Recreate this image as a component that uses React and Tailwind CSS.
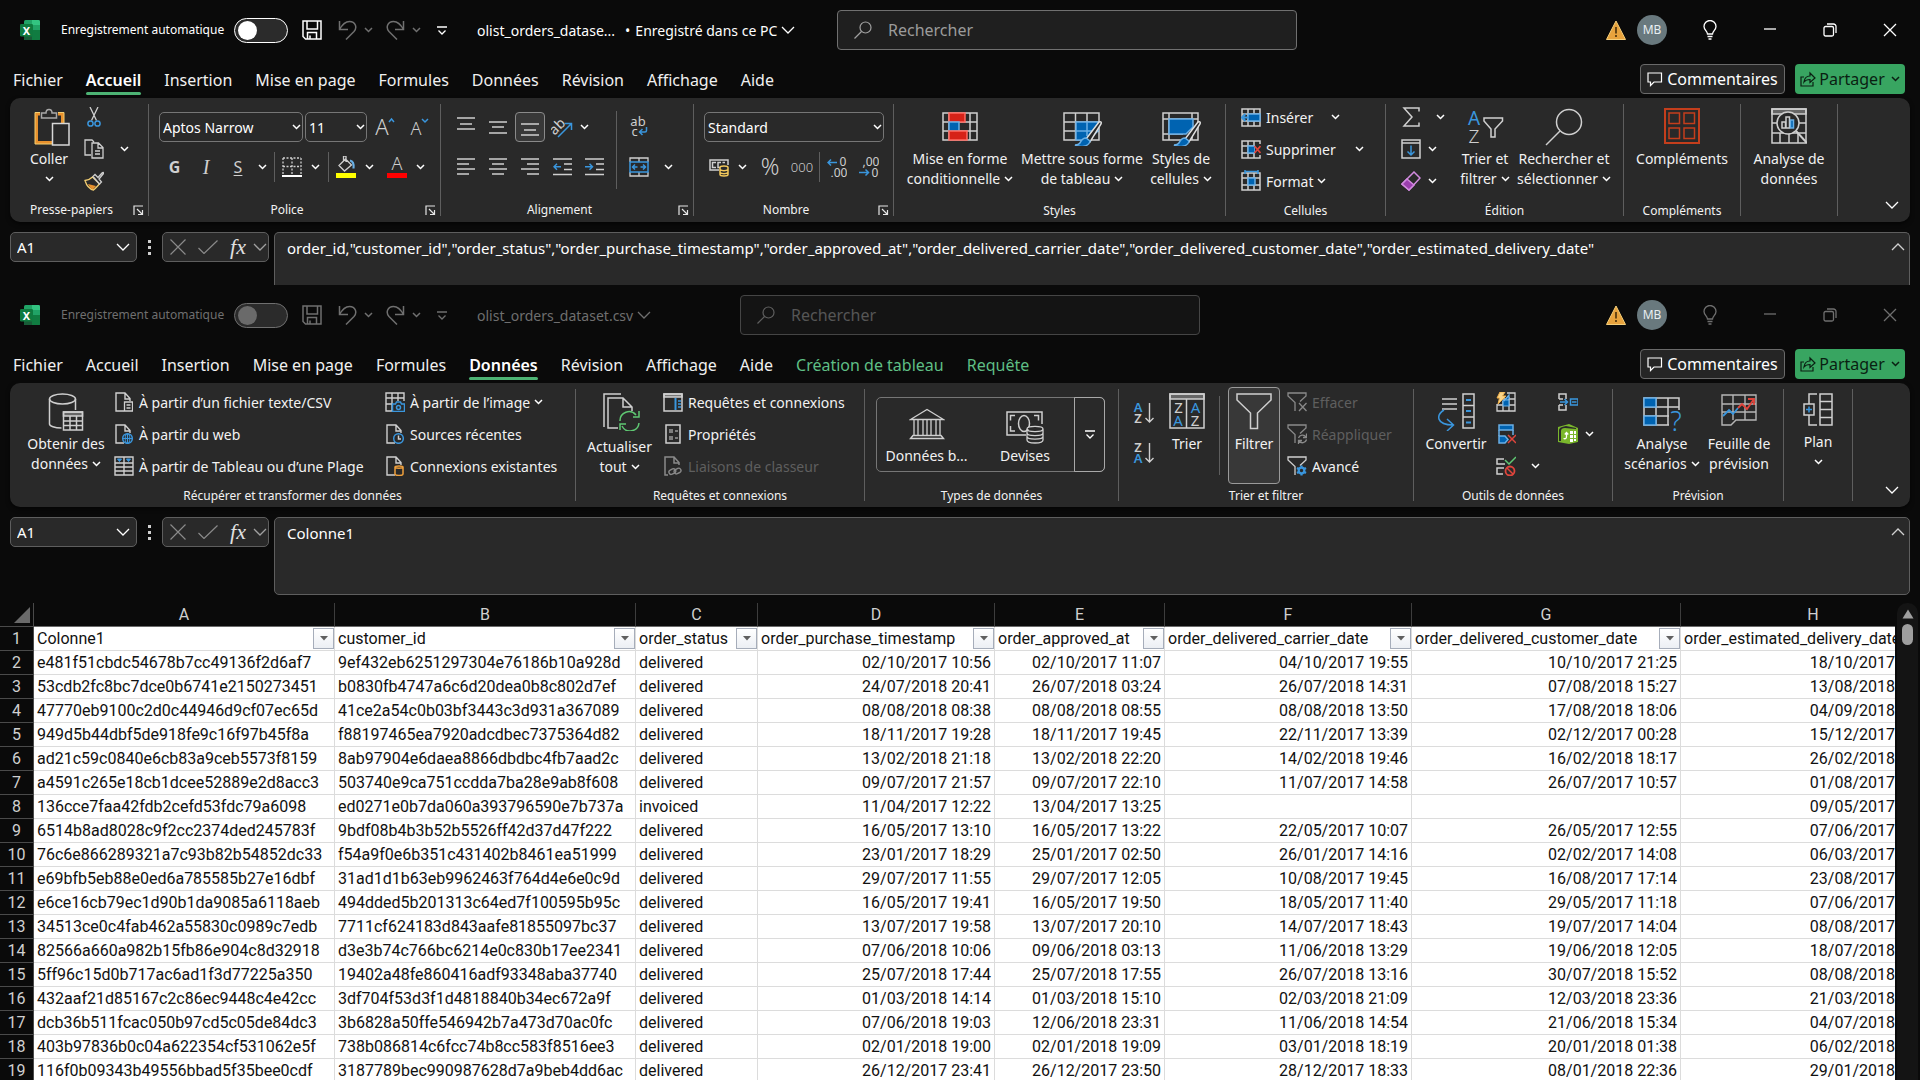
import React from "react";

const L = "#cfcfcf";
const B = "#3a96dd";
const F = "#0063b1";

/* ---------- generic pieces ---------- */

function Svg({ w = 20, h = 20, s = L, sw = 1.5, children }) {
  return (
    <svg width={w} height={h} viewBox={`0 0 ${w} ${h}`} fill="none" stroke={s} strokeWidth={sw} className="block shrink-0" aria-hidden="true">
      {children}
    </svg>
  );
}

function T({ c = L, size = 12, weight = 400, children, ...rest }) {
  return (
    <text fill={c} stroke="none" fontSize={size} fontWeight={weight} textAnchor="middle" fontFamily="Noto Sans, Open Sans, sans-serif" {...rest}>
      {children}
    </text>
  );
}

const Caret = ({ color = "#fff" }) => (
  <Svg w={9} h={6} s={color}><path d="M1 1l3.5 3.5L8 1" /></Svg>
);

const WideCaret = ({ color = "#fff", up }) => (
  <Svg w={14} h={8} s={color} sw={1.3}><path d={up ? "M1 7l6-6 6 6" : "M1 1l6 6 6-6"} /></Svg>
);

function CaretButton({ label, className = "" }) {
  return (
    <button type="button" aria-label={label} className={`flex h-6 w-4 shrink-0 items-center justify-center ${className}`}>
      <Caret />
    </button>
  );
}

function IconButton({ label, className = "", children }) {
  return (
    <button type="button" aria-label={label} className={`flex h-[30px] shrink-0 items-center justify-center ${className}`}>
      {children}
    </button>
  );
}

const Divider = ({ className = "" }) => <div className={`w-px shrink-0 bg-[#5e5e5e] ${className}`} />;

const Row = ({ children }) => <div className="flex h-8 items-center pb-0.5">{children}</div>;

function Group({ label, launcher, className, children }) {
  return (
    <>
      <section aria-label={label || undefined} className={`flex shrink-0 flex-col pt-1 ${className}`}>
        <div className="flex h-24">{children}</div>
        <div className={`flex h-6 items-center text-[12px] ${launcher ? "" : "pt-0.5"}`}>
          <span className="flex-1 text-center whitespace-nowrap">{label}</span>
          {launcher && (
            <button type="button" aria-label={`Options ${label}`} className="mr-[3px] w-3">
              <Svg w={11} h={11} s="#e6e6e6" sw={1.2}><path d="M1 10V1h9M4 4l5 5M9.500 5v4.500H5" /></Svg>
            </button>
          )}
        </div>
      </section>
      <Divider className="my-1.5" />
    </>
  );
}

function BigButton({ icon, lines, caret, className = "", iconClass = "h-[41px]" }) {
  return (
    <button type="button" className={`flex shrink-0 flex-col items-center pt-1.5 text-[14px] leading-5 whitespace-nowrap ${className}`}>
      <span className={`flex items-start justify-center ${iconClass}`}>{icon}</span>
      {lines.map((t, i) => (
        <span key={t} className="flex h-5 items-center gap-1">
          {t}
          {caret && i === lines.length - 1 && <Caret />}
        </span>
      ))}
    </button>
  );
}

function RowButton({ icon, text, disabled, caret, caretClass = "" }) {
  return (
    <Row>
      <button type="button" disabled={disabled} aria-label={text} className="flex items-center gap-[5px] text-[14px] whitespace-nowrap disabled:text-[#5f5f5f]">
        <span className="flex w-5 justify-center">{icon}</span>
        {text}
      </button>
      {caret && <CaretButton label={`${text}, options`} className={caretClass} />}
    </Row>
  );
}

/* ---------- title bar icons ---------- */

const ExcelLogo = () => (
  <Svg s="none">
    <rect x="4" y="0" width="16" height="20" rx="1.5" fill="#21a366" />
    <path d="M12 0h6.500a1.500 1.500 0 0 1 1.500 1.500V5h-8z" fill="#33c481" />
    <path d="M4 10h8v10H5.500A1.500 1.500 0 0 1 4 18.500z" fill="#185c37" />
    <path d="M12 10h8v8.500a1.500 1.500 0 0 1-1.500 1.500H12z" fill="#107c41" />
    <rect x="0" y="4" width="13" height="12.500" rx="1.200" fill="#0f7a3f" />
    <T x="6.500" y="14.500" size={11} weight={700} c="#fff">X</T>
  </Svg>
);
const SaveIcon = ({ c }) => (
  <Svg s={c}><path d="M1 1h18v18H3.500L1 16.500zM5 1v8h10.500V1M5.500 19v-6.500h9V19M8 15.500V19" /></Svg>
);
const UndoIcon = () => (
  <Svg s="#707070" w={19}><path d="M1.500 1v8.500H10M1.500 9.500C4 5 7 1.500 11.500 1.500c6 0 8 6 4.500 10L8 19.500" /></Svg>
);
const RedoIcon = () => (
  <Svg s="#707070" w={19}><path d="M17.500 1v8.500H9M17.500 9.500C15 5 12 1.500 7.500 1.500c-6 0-8 6-4.500 10l8 8" /></Svg>
);
const CustomIcon = ({ c }) => (
  <Svg w={10} h={9} s={c} sw={1.3}><path d="M0 1h10M1.500 4.500L5 8l3.500-3.500" /></Svg>
);
const SearchIcon = ({ c }) => (
  <Svg w={18} h={18} s={c} sw={1.2}><circle cx="11.500" cy="6.500" r="5.500" /><path d="M7.500 10.500L.500 17.500" /></Svg>
);
const WarnIcon = () => (
  <Svg w={20} h={19} s="none"><path d="M10 0l9.500 18.500H.500z" fill="#e8a33d" stroke="#f5cf7a" strokeWidth="1" /><path d="M10 6v6.500M10 14v2" stroke="#5a3d10" strokeWidth="1.800" /></Svg>
);

/* ---------- ribbon icons ---------- */

const PasteIcon = () => (
  <Svg w={42} h={38}>
    <path d="M12 6H8.500v28.500H24M30 6h4.500v9" stroke="#e8912d" strokeWidth="3" />
    <path d="M12 4.500H7V36h17M30 4.500h6V15" stroke="#f3cf73" strokeWidth="1" />
    <path d="M13.500 5h4.500a3 3.500 0 0 1 6 0h4.500v5h-15z" fill="#292929" stroke="#a8a8a8" />
    <rect x="24.500" y="15.500" width="16.500" height="21.500" fill="#292929" stroke="#d8d8d8" />
  </Svg>
);
const CutIcon = () => (
  <Svg w={14}><path d="M3 0l6.500 13.500M11 0L4.500 13.500" strokeWidth="1.300" /><circle cx="3.500" cy="16.500" r="2.600" stroke={B} /><circle cx="10.500" cy="16.500" r="2.600" stroke={B} /></Svg>
);
const CopyIcon = () => (
  <Svg sw={1.3}><path d="M7 16H1V1h7l2 2M8 4h6.500L19 8.500V19H8zM14 4v5h5M11 12h5M11 15h5" /></Svg>
);
const BrushIcon = () => (
  <Svg sw={1.3}>
    <path d="M1 9.500c3.500-.300 5.500-1.500 7.500-3.500l7 7c-2 2-3.500 4-6 6C5 18 2.500 14.500 1 9.500z" fill="#292929" stroke="#f3cf73" />
    <path d="M4 13l8 2-3 3.500c-2-.500-4-3-5-5.500z" fill="#e8912d" stroke="none" />
    <path d="M9 5.500l2-2 3 3L18 2q1.500-1.500 1.500.500L15 8l2.500 3-2 2z" fill="#292929" />
  </Svg>
);
const GrowIcon = ({ down }) => (
  <Svg><T x="7" y={down ? 18 : 18} size={down ? 18 : 22} weight={300}>A</T><path d={down ? "M13 2l3 3 3-3" : "M14 5l2.500-3L19 5"} stroke={B} /></Svg>
);
const BordersIcon = () => (
  <Svg><path d="M1 1h18M1 1v17M19 1v17M10 1v17M1 9.500h18" strokeDasharray="2 1.500" strokeWidth="1.300" /><path d="M0 19h20" stroke="#fff" strokeWidth="2" /></Svg>
);
const FillIcon = () => (
  <Svg h={22}><path d="M10 2.500L3 9.500l5.500 5.500 7-6L10 3.500zM10 6V0H7.500v5" strokeWidth="1.300" /><path d="M14 4.500c3 .500 4 3.500 3.500 8" stroke="#69afe5" strokeWidth="2.200" /><rect y="17" width="20" height="5" fill="#ffff00" stroke="none" /></Svg>
);
const FontColorIcon = () => (
  <Svg h={22}><T x="10" y="14" size={18} weight={300}>A</T><rect y="17" width="20" height="5" fill="#f00" stroke="none" /></Svg>
);

const HLines = ({ rows, h = 18 }) => (
  <Svg w={18} h={h}>{rows.map(([a, b, y]) => <path key={y} d={`M${a} ${y}H${b}`} />)}</Svg>
);
const OrientIcon = () => (
  <Svg w={22} h={22}><T x="7" y="14" size={14} transform="rotate(-45 8 11)">ab</T><path d="M7 21L20 8M13.500 7.500H20.500V14" stroke={B} /></Svg>
);
const WrapIcon = () => (
  <Svg w={18} h={22}><T x="8" y="10" size={13}>ab</T><T x="4.500" y="20" size={13}>c</T><path d="M16.500 11v3.500q0 1.500-1.500 1.500H9.500M12.500 13L9.500 16l3 3" stroke={B} /></Svg>
);
const MergeIcon = () => (
  <Svg><path d="M1 5V1h18v4M10 1v4M1 15v4h18v-4M10 15v4" strokeWidth="1.300" /><rect x="1" y="5" width="18" height="10" stroke={B} /><path d="M3.500 10h5M6 7.500L3.500 10 6 12.500M16.500 10h-5M14 7.500l2.500 2.500-2.500 2.500" stroke={B} /></Svg>
);
const IndentIcon = ({ right }) => (
  <Svg w={19} h={18}><path d="M0 1h19M11 6h8M11 11.500h8M0 16.500h19" /><path d={right ? "M0 8.800h7.500M4.500 5.800l3 3-3 3" : "M8 8.800H.800M4 5.800l-3 3 3 3"} stroke={B} /></Svg>
);
const CurrencyIcon = () => (
  <Svg><path d="M10 13H1V3h18v5M7 5.500H3.500v5H7M12 5.500H9v5h2M16 5.500h-2.500" /><path d="M11 10.500c0-2 8-2 8 0v7c0 2-8 2-8 0zM11 12.500c2 1.500 6 1.500 8 0M11 15.500c2 1.500 6 1.500 8 0" stroke="#f3c95c" fill="#292929" /></Svg>
);
const PercentIcon = () => <Svg><T x="10" y="18" size={23} weight={300}>%</T></Svg>;
const ZerosIcon = () => <Svg w={22} h={14}><T x="11" y="12" size={13} weight={300}>000</T></Svg>;
const DecimalIcon = ({ less }) => (
  <Svg>
    <T x={less ? 12 : 16} y="9" size={12}>{less ? ",00" : "0"}</T>
    <T x={less ? 16 : 12} y="20" size={12}>{less ? "0" : ",00"}</T>
    <path d={less ? "M0 15.500h9.500M6.500 12.500l3 3-3 3" : "M10 5.500H1M4 2.500l-3 3 3 3"} stroke={B} />
  </Svg>
);

const CondIcon = () => (
  <Svg w={36} h={34}>
    <path d="M1 5h34v27H1zM1 14h34M1 23h34M7 5v27M28 5v27" />
    <rect x="7" y="5" width="16" height="9" fill="#d62218" stroke="#ff6b62" />
    <rect x="7" y="14" width="10" height="9" fill={F} stroke="#69afe5" />
    <rect x="7" y="23" width="18" height="9" fill="#d62218" stroke="#ff6b62" />
  </Svg>
);
const Brush2 = () => (
  <>
    <path d="M36 14L23 31l4 3 11-18q1-3-2-2z" fill="#292929" stroke="#e0e0e0" />
    <path d="M23 30c-4 0-5 3-6 5-1 1.500-3 2-5 2 5 2.500 14 2 15-4z" fill={F} stroke="#69afe5" />
  </>
);
const TableStyleIcon = () => (
  <Svg w={39} h={38}>
    <path d="M1 5h35v27H1zM1 14h35M1 23h35M12.500 5v27M24 5v27" />
    <path d="M13 14h22v9L25 32H13z" fill={F} stroke="#69afe5" />
    <path d="M13 23h18M24 14v14" stroke="#69afe5" />
    <Brush2 />
  </Svg>
);
const CellStyleIcon = () => (
  <Svg w={39} h={38}>
    <path d="M1 5h35v27H1zM1 11h35M7 5v27M30 5v27M1 26h20" />
    <path d="M7 11h24v8l-7 7H7z" fill={F} stroke="#69afe5" />
    <Brush2 />
  </Svg>
);
const CellsIcon = ({ kind }) => (
  <Svg h={22}>
    <path d="M1 3h18v17H1zM1 8h18M1 15h18M7 3v17M13 3v17" />
    <rect x="7" y="8" width={kind === "insert" ? 12 : 7} height="7" fill={F} stroke="#69afe5" />
    {kind === "insert" && <path d="M8 11.500H1M4.500 8L1 11.500 4.500 15" stroke={B} strokeWidth="2" />}
    {kind === "delete" && <><path d="M14 6h6v11h-6z" fill="#292929" stroke="none" /><path d="M13.500 8l6 7M19.500 8l-6 7" stroke="#e0453c" strokeWidth="1.800" /></>}
    {kind === "format" && <path d="M4 1.500h13M4 0v4M17 0v4" stroke={B} />}
  </Svg>
);
const SigmaIcon = () => <Svg w={18} h={20}><path d="M17 4.500V1H2l8 9-8 9h15v-3.500" /></Svg>;
const FillDownIcon = () => <Svg h={20}><path d="M1 1h18v18H1zM1 4h18" /><path d="M10 6.500V16M6.500 12.500L10 16l3.500-3.500" stroke={B} /></Svg>;
const EraserIcon = () => <Svg><path d="M13 1l6 6L8 19l-7-6z" stroke="#d38be0" /><path d="M6 8l7 6-5 5-7-6z" fill="#9b3fae" stroke="#d38be0" /></Svg>;
const SortFilterIcon = () => (
  <Svg w={37} h={37}><T x="7" y="17" size={19} c={B}>A</T><T x="7" y="35" size={19} weight={300}>Z</T><path d="M17 10h18.500v3l-7.500 8v8h-4v-8l-7-8z" /></Svg>
);
const FindIcon = () => <Svg w={38} h={38}><circle cx="24" cy="14" r="12.500" /><path d="M15 23L1 37" /></Svg>;
const AddinsIcon = () => (
  <Svg w={36} h={36} s="#c43e1c"><path d="M1 1h34v34H1z" strokeWidth="2" /><path d="M5 5h10.500v10.500H5zM20 5h10.500v10.500H20zM5 20h10.500v10.500H5zM20 20h10.500v10.500H20z" /></Svg>
);
const AnalyzeIcon = () => (
  <Svg w={36} h={37}>
    <path d="M1 1h34v5H1z" fill="#666" /><path d="M1 1h34v34H1zM1 15h34M1 25h34M9 25v10M18 25v10M27 25v10" />
    <circle cx="17" cy="15" r="11" fill="#292929" /><path d="M25 23l11 12" strokeWidth="2" />
    <path d="M11 14h3.500v6H11zM15 9h3.500v11H15z" /><path d="M19.500 12h3v8h-3z" fill={F} stroke="#69afe5" />
  </Svg>
);

const DatabaseIcon = () => (
  <Svg w={36} h={38}><ellipse cx="14.500" cy="6" rx="13" ry="5" /><path d="M1.500 6v25c0 2 5 4 12 4M27.500 6v11" /><path d="M15.500 19h19v4h-19z" fill="#666" /><path d="M15.500 19h19v18h-19zM15.500 28h19M15.500 32.500h19M22 23v14M28.500 23v14" /></Svg>
);
const DocBase = () => <path d="M9 19H1V1h9l5 5.500V9M10 1v6h5" strokeWidth="1.400" />;
const FileTextIcon = () => <Svg w={18}><DocBase /><path d="M9.500 10h8v9h-8zM11.500 13h4M11.500 16h4" fill="#292929" strokeWidth="1.300" /></Svg>;
const FileWebIcon = () => (
  <Svg w={18}><DocBase /><circle cx="12.500" cy="14.500" r="4.800" fill="#292929" stroke={B} /><path d="M12.500 10v9M8 14.500h9" stroke={B} strokeWidth="1.200" /><ellipse cx="12.500" cy="14.500" rx="2.300" ry="4.800" stroke={B} strokeWidth="1" /></Svg>
);
const TableIcon = () => <Svg><path d="M1 1h18v18H1zM1 7h18M1 11h18M1 15h18M10 1v18" strokeWidth="1.400" /><path d="M3.500 3h4l-2 2.500zM12.500 3h4l-2 2.500z" fill={B} stroke={B} strokeWidth="1" /></Svg>;
const ImageIcon = () => <Svg><path d="M7 19H1V1h18v8M1 6h18M1 12h7M7 1v18M13 1v8" strokeWidth="1.400" /><path d="M7.500 12h3l1-2h4l1 2h3v7.500h-12z" fill="#292929" stroke={B} /><circle cx="13.500" cy="15.500" r="2" stroke={B} /></Svg>;
const RecentIcon = () => <Svg w={18}><DocBase /><circle cx="12.500" cy="14.500" r="4.800" fill="#292929" stroke={B} /><path d="M12.500 11.500v3.500h2.500" /></Svg>;
const ConnIcon = () => <Svg w={18}><DocBase /><path d="M9 11c0-1.500 8-1.500 8 0v7c0 2-8 2-8 0zM9 11c0 1.500 8 1.500 8 0" fill="#292929" stroke="#f0a03c" /></Svg>;
const RefreshAllIcon = () => (
  <Svg w={38} h={38}><path d="M18 1H1v33M15 35H5V5h15l9 9v4M20 5v9h9" /><path d="M17 28a9 9 0 0 1 16-6M36 18v6h-6M36 30a9 9 0 0 1-17 3M17 37v-6h6" stroke="#5fc873" /></Svg>
);
const QueriesIcon = () => <Svg h={19}><path d="M1 1h18v3H1z" fill="#777" /><path d="M1 1h18v17H1z" /><path d="M12.500 5v12" stroke={B} strokeWidth="2" /><path d="M15 8h3M15 11h3M15 14h3" stroke={B} /></Svg>;
const PropsIcon = () => <Svg w={16}><path d="M1 1h14v18H1z" /><path d="M4 6h4M4 8h4M4 13h4M4 15h4M10 7h3M10 14h3" stroke="#9a9a9a" strokeWidth="1.300" /></Svg>;
const LinksIcon = () => (
  <Svg w={18} s="#8a8a8a"><path d="M4 19H1V1h9l5 5.500V9M10 1v6h5" /><g strokeWidth="1.400"><rect x="5" y="13.500" width="7" height="4.500" rx="2.200" transform="rotate(-25 8 16)" /><rect x="10" y="13" width="7" height="4.500" rx="2.200" transform="rotate(-25 13 15)" /></g></Svg>
);
const BankIcon = () => (
  <Svg w={36} h={38}><path d="M1.500 11.500L18 1.500l16.500 10zM5 12v15M9 12v15M14 12v15M18 12v15M22 12v15M27 12v15M31 12v15" strokeWidth="1.300" /><path d="M4 27.500h28l2.500 3h-33z" /></Svg>
);
const MoneyIcon = () => (
  <Svg w={38} h={38}><path d="M20 27H1V4h35v12M9 7.500H4.500v5M4.500 18v5H9M28 7.500h4.500v5" /><ellipse cx="18" cy="15.500" rx="5.500" ry="8" /><path d="M21 21c0-3.500 16-3.500 16 0v11c0 4-16 4-16 0zM21 21c0 3.500 16 3.500 16 0M21 25c0 3.500 16 3.500 16 0M21 28.500c0 3.500 16 3.500 16 0" fill="#292929" strokeWidth="1.300" /></Svg>
);
const SortIcon = ({ desc }) => (
  <Svg w={22} h={22}><T x="5" y="9.500" size={13} weight={600} c={desc ? L : B}>{desc ? "Z" : "A"}</T><T x="5" y="21" size={13} weight={600} c={desc ? B : L}>{desc ? "A" : "Z"}</T><path d="M16.500 1v19M12.500 16l4 4 4-4" strokeWidth="1.400" /></Svg>
);
const SortBigIcon = () => (
  <Svg w={36} h={36}><path d="M1 1h34v5H1z" fill="#666" /><path d="M1 1h34v34H1zM17.500 6v29" /><T x="9.500" y="19.500" size={15}>Z</T><T x="9" y="32.500" size={15} c={B}>A</T><T x="26.500" y="19.500" size={15} c={B}>A</T><T x="26" y="32.500" size={15}>Z</T></Svg>
);
const FunnelBig = () => <Svg w={36} h={37}><path d="M1 1h34v6L21.500 20v15.500h-7V20L1 7z" /></Svg>;
const FunnelSmall = ({ kind, c }) => (
  <Svg s={c}>
    <path d="M13 9.500l6-5.500V1H1v3l7 6.500V19" strokeWidth="1.300" />
    {kind === "clear" && <path d="M12 11l7.500 8M19.500 11L12 19" strokeWidth="1.300" />}
    {kind === "reapply" && <path d="M11.500 14a4.200 4.200 0 0 1 7.500-1M19.500 9.500v4H16M19.500 15.500a4.200 4.200 0 0 1-7.500 1.500M11.500 20v-3.500H15" strokeWidth="1.300" />}
    {kind === "advanced" && <><circle cx="14.500" cy="14.500" r="2.800" stroke={B} strokeWidth="2.200" /><path d="M14.500 9.500v2.500M14.500 17v2.500M10 12l2.200 1.300M16.800 15.700L19 17M10 17l2.200-1.300M16.800 13.300L19 12" stroke={B} strokeWidth="2.200" /></>}
  </Svg>
);
const ConvertIcon = () => (
  <Svg w={38} h={38}><path d="M5 6h15M5 11h15M5 16h15M26 1h11v34H26zM26 12.500h11M26 24h11" /><path d="M29 7h5M29 18h5M29 29.500h5" stroke={B} strokeWidth="2" /><path d="M7 17c-8 5-8 15 9 15M10 26l6.500 6-6.500 6" stroke={B} /></Svg>
);
const FlashIcon = () => <Svg><path d="M1 12v7h18V1h-8M1 13h18M7 7h12M7 9v10M13 5v14" strokeWidth="1.300" /><path d="M8 9l5-6v4M7 8h6v6H7z" fill={F} stroke="#69afe5" strokeWidth="1.200" /><path d="M4 0h5L6.500 4H10L2 12l1.500-6H1z" fill="#f9d58a" stroke="#f0b04a" strokeWidth="1" /></Svg>;
const DedupIcon = () => <Svg><path d="M3 1h14v5H3zM3 12h6l3 3.500-3 3.500H3z" fill={F} stroke="#69afe5" /><path d="M3 6v6M17 6v5" stroke="#69afe5" /><path d="M12 11l8 8M20 11l-8 8" stroke="#e0453c" /></Svg>;
const ValidIcon = () => <Svg><path d="M8 3H1v5h8M8 12H1v6h6" /><path d="M9 4l4 4 7-7" stroke="#5fc873" /><circle cx="14" cy="15" r="4.500" stroke="#e0453c" strokeWidth="1.800" /><path d="M11 12l6 6" stroke="#e0453c" /></Svg>;
const ConsolidateIcon = () => <Svg h={18}><path d="M8 6V1H1v5M1 12v5h7v-5M1 6h4M1 12h4" /><path d="M2 9h7M6.500 6l3 3-3 3M12.500 6H20v6h-7.500zM14 9h4.500" stroke={B} /></Svg>;
const ModelIcon = () => <Svg s="none"><path d="M0 3l11-3 9 4v14l-9 2-11-2z" fill="#7ab72c" /><path d="M3 17V7q0-3 4-3l11 1v-1L8 2Q1 3 1 6v11z" fill="#292929" /><path d="M12 7h3v3h-3zM16 7h2v3h-2zM12 11h3v3h-3zM16 11h2v3h-2zM12 15h3v3h-3zM16 15h2v2h-2z" fill="#fff" /><path d="M5.500 14.500q3 1 3-2V9M6.800 10.500L8.500 8.500l1.800 2" stroke="#fff" strokeWidth="1.300" /></Svg>;
const WhatIfIcon = () => (
  <Svg w={39} h={39}><path d="M26 32H1V5h35v12M1 14h35M1 23h25M13 5v27M25 5v27" /><path d="M1 5h12v9H1zM1 23h12v9H1z" fill={F} stroke="#69afe5" /><T x="33" y="38" size={27} weight={300} c={B}>?</T></Svg>
);
const ForecastIcon = () => (
  <Svg w={36} h={38}><path d="M1 2h34v25H15l-5 5H1zM1 11h34M1 19h34M12 2v25M24 2v25" strokeWidth="1.400" stroke="#b5b5b5" /><path d="M2 23l6-6 4 4 5-6" stroke={B} strokeWidth="1.800" /><path d="M17 15l4-4 5 5 7-10M27 6h6v6" stroke="#e0453c" strokeWidth="1.800" /></Svg>
);
const OutlineIcon = () => (
  <Svg w={30} h={33}><path d="M17 1h12v31H17zM17 8.500h12M17 16.500h12M17 24.500h12M14 1H6v10M6 22v10h8M1 11h10v11H1z" /><path d="M6 13.500v6M3 16.500h6" stroke={B} /></Svg>
);

/* ---------- window chrome ---------- */

function TitleBar({ active, id, title, status, leftClass }) {
  const c = active ? "#ffffff" : "#6f6f6f";
  const tone = active ? "text-white" : "text-[#6f6f6f]";
  return (
    <header className="flex h-[60px] items-center">
      <div className={`flex shrink-0 items-center pl-5 ${leftClass}`}>
        <ExcelLogo />
        <label htmlFor={id} className={`ml-[21px] w-[173px] text-[12px] whitespace-nowrap ${tone}`}>Enregistrement automatique</label>
        <span className="relative flex h-[25px] w-[54px] shrink-0">
          <input
            id={id}
            type="checkbox"
            role="switch"
            className={`h-full w-full appearance-none rounded-full border bg-[#2b2b2b] ${active ? "border-white" : "border-[#6f6f6f]"}`}
          />
          <span className={`pointer-events-none absolute top-[3px] left-1 size-[19px] rounded-full ${active ? "bg-white" : "bg-[#6a6a6a]"}`} />
        </span>
        <button type="button" aria-label="Enregistrer" className="ml-[14px]"><SaveIcon c={c} /></button>
        <button type="button" aria-label="Annuler" className="ml-4 w-5"><UndoIcon /></button>
        <span className="ml-1.5 w-4"><Caret color="#707070" /></span>
        <button type="button" aria-label="Rétablir" className="ml-1.5 w-5"><RedoIcon /></button>
        <span className="ml-1.5 w-4"><Caret color="#707070" /></span>
        <button type="button" aria-label="Personnaliser" className="ml-[9px]"><CustomIcon c={c} /></button>
        <button type="button" className={`ml-[30px] flex items-center text-[14px] whitespace-nowrap ${tone}`}>
          <span>{title}</span>
          {status && <><span className="ml-2.5">•</span><span className="ml-[5px]">{status}</span></>}
          <span className="ml-1"><WideCaret color={c} /></span>
        </button>
      </div>
      <div className={`flex h-10 w-[460px] shrink-0 items-center rounded-[4px] border pl-4 ${active ? "border-[#707070] bg-[#1f1f1f]" : "border-[#454545] bg-[#141414]"}`}>
        <SearchIcon c={active ? "#a0a0a0" : "#5f5f5f"} />
        <input
          type="search"
          aria-label="Rechercher"
          placeholder="Rechercher"
          className={`ml-4 flex-1 bg-transparent text-[16px] outline-none ${active ? "placeholder:text-[#9b9b9b]" : "placeholder:text-[#565656]"}`}
        />
      </div>
      <div className="ml-auto flex shrink-0 items-center">
        <WarnIcon />
        <span className="ml-[11px] flex size-[30px] items-center justify-center rounded-full bg-[#69797e] text-[12px] text-[#e8eef0]">MB</span>
        <div className="ml-[13px] flex">
          <IconButton label="Nouveautés" className="w-[60px]">
            <Svg w={14} h={20} s={c} sw={1.3}><path d="M4.500 14c0-3-3.500-4-3.500-7.500a6 6 0 0 1 12 0C13 10 9.500 11 9.500 14zM4.500 16.500h5M5.500 19h3" /></Svg>
          </IconButton>
          <IconButton label="Réduire" className="w-[60px]"><Svg w={12} h={4} s={c} sw={1.3}><path d="M0 1h12" /></Svg></IconButton>
          <IconButton label="Restaurer" className="w-[60px]">
            <Svg w={14} h={14} s={c} sw={1.3}><rect x="1" y="3.500" width="9.500" height="9.500" rx="1.500" /><path d="M4 1h6.500a2.500 2.500 0 0 1 2.500 2.500V10" /></Svg>
          </IconButton>
          <IconButton label="Fermer" className="w-[60px]"><Svg w={14} h={14} s={c} sw={1.3}><path d="M1 1l12 12M13 1L1 13" /></Svg></IconButton>
        </div>
      </div>
    </header>
  );
}

const BASE_TABS = ["Fichier", "Accueil", "Insertion", "Mise en page", "Formules", "Données", "Révision", "Affichage", "Aide"];

function TabRow({ selected, extra = [] }) {
  return (
    <div className="flex h-[38px]">
      <nav aria-label="Onglets du ruban" className="flex gap-[23px] pl-[13px] text-[16px]">
        {[...BASE_TABS, ...extra].map((t) => (
          <button
            key={t}
            type="button"
            className={`relative flex items-center pt-0.5 whitespace-nowrap ${t === selected ? "font-semibold text-white" : extra.includes(t) ? "text-[#5fbf85]" : "text-[#f0f0f0]"}`}
          >
            {t}
            {t === selected && <span className="absolute inset-x-0 bottom-[3px] h-[3px] rounded-full bg-[#4db374]" />}
          </button>
        ))}
      </nav>
      <div className="ml-auto flex items-center gap-2.5 pr-[15px] text-[16px]">
        <button type="button" className="flex h-[30px] w-[145px] items-center justify-center gap-1 rounded-[4px] border border-[#6a6a6a] bg-[#252525] text-white">
          <Svg w={16} h={15} s="#fff" sw={1.2}><path d="M1 1h13.500v9H7l-3.500 3.500V10H1z" /></Svg>
          Commentaires
        </button>
        <button type="button" className="flex h-[30px] w-[110px] items-center justify-center gap-[3px] rounded-[4px] bg-[#38a561] text-[#0a1f12]">
          <Svg w={16} h={16} s="#0a1f12" sw={1.2}><path d="M4 6H1v9h12v-4M4 11c.500-4 3-6 6-6V2l5 5-5 4.500V8.500C7.500 8.500 5.500 9 4 11z" /></Svg>
          Partager
          <span className="ml-[3px]"><Caret color="#0a1f12" /></span>
        </button>
      </div>
    </div>
  );
}

function Ribbon({ label, children }) {
  return (
    <div role="toolbar" aria-label={label} className="mx-2.5 flex h-[124px] rounded-[10px] bg-[#292929] text-[#f2f2f2] shadow-[0_2px_4px_rgba(0,0,0,0.6)]">
      {children}
      <div className="flex flex-1 items-end justify-end pr-[11px] pb-[13px]">
        <button type="button" aria-label="Réduire le ruban"><WideCaret /></button>
      </div>
    </div>
  );
}

function FormulaBar({ value, barClass, boxClass }) {
  return (
    <div className={`mx-2.5 mt-2.5 flex items-start ${barClass}`}>
      <div className="flex h-[30px] w-[127px] shrink-0 items-center rounded-[5px] border border-[#5e5e5e] bg-[#292929] pr-1.5 pl-1.5">
        <input aria-label="Zone Nom" defaultValue="A1" className="w-full min-w-0 bg-transparent text-[15px] text-white outline-none" />
        <button type="button" aria-label="Liste des noms"><WideCaret /></button>
      </div>
      <div className="flex h-[30px] w-[25px] shrink-0 flex-col items-center justify-center gap-[3px]">
        <span className="size-[3px] bg-[#d0d0d0]" /><span className="size-[3px] bg-[#d0d0d0]" /><span className="size-[3px] bg-[#d0d0d0]" />
      </div>
      <div className="flex h-[30px] w-[107px] shrink-0 items-center rounded-[5px] border border-[#5e5e5e] bg-[#292929] pl-[7px]">
        <button type="button" aria-label="Annuler la saisie"><Svg w={16} h={16} s="#8a8a8a" sw={1.2}><path d="M.500.500l15 15M15.500.500l-15 15" /></Svg></button>
        <button type="button" aria-label="Entrer" className="ml-3"><Svg w={20} h={14} s="#8a8a8a" sw={1.2}><path d="M.500 8L6 13.500 19.500.500" /></Svg></button>
        <button type="button" aria-label="Insérer une fonction" className="ml-2.5 w-5 font-['Liberation_Serif',serif] text-[22px] leading-6 italic text-[#e0e0e0]">fx</button>
        <button type="button" aria-label="Fonctions récentes" className="ml-[5px]"><WideCaret color="#a0a0a0" /></button>
      </div>
      <div className={`relative ml-[5px] flex flex-1 border-[#5e5e5e] bg-[#292929] ${boxClass}`}>
        <textarea
          aria-label="Barre de formule"
          readOnly
          value={value}
          className="h-full flex-1 resize-none overflow-hidden bg-transparent pt-[5px] pr-8 pl-3 text-[15px] leading-5 text-white outline-none"
        />
        <button type="button" aria-label="Réduire la barre" className="absolute top-2.5 right-1"><WideCaret up color="#d0d0d0" /></button>
      </div>
    </div>
  );
}

function Combo({ label, value, className }) {
  return (
    <span className={`relative flex h-[30px] ${className}`}>
      <select aria-label={label} className="h-full w-full appearance-none rounded-[5px] border border-[#767676] bg-[#292929] pl-[3px] text-[14px] text-white outline-none">
        <option>{value}</option>
      </select>
      <span className="pointer-events-none absolute top-[12px] right-[2px]"><Caret /></span>
    </span>
  );
}

/* ---------- first window ---------- */

function HomeRibbon() {
  return (
    <Ribbon label="Accueil">
      <Group label="Presse-papiers" launcher className="w-[138px]">
        <BigButton className="ml-1 w-[70px]" icon={<PasteIcon />} lines={["Coller", ""]} caret />
        <div>
          <Row><IconButton label="Couper" className="w-5"><CutIcon /></IconButton></Row>
          <Row><IconButton label="Copier" className="w-5"><CopyIcon /></IconButton><CaretButton label="Options de copie" className="ml-3" /></Row>
          <Row><IconButton label="Reproduire la mise en forme" className="w-5"><BrushIcon /></IconButton></Row>
        </div>
      </Group>

      <Group label="Police" launcher className="w-[291px]">
        <div className="flex flex-col gap-2.5 pt-2.5 pl-2.5">
          <div className="flex items-center">
            <Combo label="Police" value="Aptos Narrow" className="w-36" />
            <Combo label="Taille de police" value="11" className="ml-0.5 w-[62px]" />
            <IconButton label="Augmenter la taille" className="ml-2 w-5"><GrowIcon /></IconButton>
            <IconButton label="Réduire la taille" className="ml-3.5 w-5"><GrowIcon down /></IconButton>
          </div>
          <div className="flex items-center">
            <IconButton label="Gras" className="w-[31px] text-[16px] font-bold text-[#cfcfcf]">G</IconButton>
            <IconButton label="Italique" className="w-8 font-['Liberation_Serif',serif] text-[20px] italic text-[#cfcfcf]">I</IconButton>
            <IconButton label="Souligné" className="w-8 text-[16px] text-[#cfcfcf] underline underline-offset-2">S</IconButton>
            <CaretButton label="Options de soulignement" />
            <Divider className="ml-1 h-[30px]" />
            <IconButton label="Bordures" className="ml-[7px] w-5"><BordersIcon /></IconButton>
            <CaretButton label="Options de bordures" className="ml-[5px]" />
            <Divider className="ml-[5px] h-[30px]" />
            <IconButton label="Couleur de remplissage" className="ml-[7px] w-5"><FillIcon /></IconButton>
            <CaretButton label="Autres couleurs de remplissage" className="ml-[5px]" />
            <IconButton label="Couleur de police" className="ml-2.5 w-5"><FontColorIcon /></IconButton>
            <CaretButton label="Autres couleurs de police" className="ml-[5px]" />
          </div>
        </div>
      </Group>

      <Group label="Alignement" launcher className="w-[252px]">
        <div className="flex w-[175px] flex-col gap-2.5 pt-2.5 pl-[9px]">
          <div className="flex items-center">
            <IconButton label="Aligner en haut" className="w-8"><HLines rows={[[0, 18, 1], [3, 15, 7], [0, 18, 12]]} h={20} /></IconButton>
            <IconButton label="Aligner au centre" className="w-8"><HLines rows={[[0, 18, 4], [3, 15, 9], [0, 18, 15]]} /></IconButton>
            <IconButton label="Aligner en bas" className="mx-px w-[30px] rounded-[4px] border border-[#8a8a8a] bg-[#383838]"><HLines rows={[[0, 18, 7], [3, 15, 13], [0, 18, 18]]} h={20} /></IconButton>
            <IconButton label="Orientation" className="w-8"><OrientIcon /></IconButton>
            <CaretButton label="Options d'orientation" className="-ml-0.5" />
          </div>
          <div className="flex items-center">
            <IconButton label="Aligner à gauche" className="w-8"><HLines rows={[[0, 18, 1], [0, 12, 6], [0, 18, 11], [0, 12, 16]]} /></IconButton>
            <IconButton label="Centrer" className="w-8"><HLines rows={[[0, 18, 1], [3, 15, 6], [0, 18, 11], [3, 15, 16]]} /></IconButton>
            <IconButton label="Aligner à droite" className="w-8"><HLines rows={[[0, 18, 1], [6, 18, 6], [0, 18, 11], [6, 18, 16]]} /></IconButton>
            <IconButton label="Diminuer le retrait" className="w-8"><IndentIcon /></IconButton>
            <IconButton label="Augmenter le retrait" className="w-8"><IndentIcon right /></IconButton>
          </div>
        </div>
        <Divider className="mt-[9px] h-[78px]" />
        <div className="flex flex-col gap-2.5 pt-2.5 pl-3">
          <IconButton label="Renvoyer à la ligne" className="w-5"><WrapIcon /></IconButton>
          <div className="flex items-center">
            <IconButton label="Fusionner et centrer" className="w-5"><MergeIcon /></IconButton>
            <CaretButton label="Options de fusion" className="ml-[11px]" />
          </div>
        </div>
      </Group>

      <Group label="Nombre" launcher className="w-[199px]">
        <div className="flex flex-col gap-2.5 pt-2.5 pl-2.5">
          <Combo label="Format de nombre" value="Standard" className="w-[180px]" />
          <div className="flex items-center pl-[5px]">
            <IconButton label="Format comptabilité" className="w-5"><CurrencyIcon /></IconButton>
            <CaretButton label="Autres devises" className="ml-[5px]" />
            <IconButton label="Pourcentage" className="ml-2.5 w-5"><PercentIcon /></IconButton>
            <IconButton label="Séparateur de milliers" className="ml-3 w-5"><ZerosIcon /></IconButton>
            <Divider className="ml-[7px] h-[30px]" />
            <IconButton label="Ajouter une décimale" className="ml-[7px] w-5"><DecimalIcon /></IconButton>
            <IconButton label="Réduire les décimales" className="ml-3 w-5"><DecimalIcon less /></IconButton>
          </div>
        </div>
      </Group>

      <Group label="Styles" className="w-[331px]">
        <BigButton className="ml-2 w-[116px]" icon={<CondIcon />} lines={["Mise en forme", "conditionnelle"]} caret />
        <BigButton className="w-[128px]" icon={<TableStyleIcon />} lines={["Mettre sous forme", "de tableau"]} caret />
        <BigButton className="w-[70px]" icon={<CellStyleIcon />} lines={["Styles de", "cellules"]} caret />
      </Group>

      <Group label="Cellules" className="w-[159px]">
        <div className="pl-[15px]">
          <RowButton icon={<CellsIcon kind="insert" />} text="Insérer" caret caretClass="ml-3.5" />
          <RowButton icon={<CellsIcon kind="delete" />} text="Supprimer" caret caretClass="ml-4" />
          <RowButton icon={<CellsIcon kind="format" />} text="Format" caret />
        </div>
      </Group>

      <Group label="Édition" className="w-[237px]">
        <div className="w-[65px] pl-[15px]">
          <Row><IconButton label="Somme automatique" className="w-5"><SigmaIcon /></IconButton><CaretButton label="Autres fonctions" className="ml-[11px]" /></Row>
          <Row><IconButton label="Remplissage" className="w-5"><FillDownIcon /></IconButton><CaretButton label="Options de remplissage" className="ml-[3px]" /></Row>
          <Row><IconButton label="Effacer" className="w-5"><EraserIcon /></IconButton><CaretButton label="Options d'effacement" className="ml-[3px]" /></Row>
        </div>
        <BigButton className="w-[68px]" icon={<SortFilterIcon />} lines={["Trier et", "filtrer"]} caret />
        <BigButton className="w-[90px]" icon={<FindIcon />} lines={["Rechercher et", "sélectionner"]} caret />
      </Group>

      <Group label="Compléments" className="w-[116px]">
        <BigButton className="w-full" icon={<AddinsIcon />} lines={["Compléments"]} />
      </Group>
      <Group label="" className="w-24">
        <BigButton className="w-full" icon={<AnalyzeIcon />} lines={["Analyse de", "données"]} />
      </Group>
    </Ribbon>
  );
}

/* ---------- second window ---------- */

function DataRibbon() {
  return (
    <Ribbon label="Données">
      <Group label="Récupérer et transformer des données" className="w-[565px]">
        <BigButton className="ml-2 w-24" icon={<DatabaseIcon />} lines={["Obtenir des", "données"]} caret />
        <div className="w-[271px]">
          <RowButton icon={<FileTextIcon />} text="À partir d’un fichier texte/CSV" />
          <RowButton icon={<FileWebIcon />} text="À partir du web" />
          <RowButton icon={<TableIcon />} text="À partir de Tableau ou d’une Plage" />
        </div>
        <div>
          <RowButton icon={<ImageIcon />} text="À partir de l’image" caret />
          <RowButton icon={<RecentIcon />} text="Sources récentes" />
          <RowButton icon={<ConnIcon />} text="Connexions existantes" />
        </div>
      </Group>

      <Group label="Requêtes et connexions" className="w-72">
        <BigButton className="w-[87px]" iconClass="h-11 pl-[5px]" icon={<RefreshAllIcon />} lines={["Actualiser", "tout"]} caret />
        <div>
          <RowButton icon={<QueriesIcon />} text="Requêtes et connexions" />
          <RowButton icon={<PropsIcon />} text="Propriétés" />
          <RowButton icon={<LinksIcon />} text="Liaisons de classeur" disabled />
        </div>
      </Group>

      <Group label="Types de données" className="w-[253px]">
        <div className="mt-2.5 ml-[11px] flex h-[75px] w-[229px] rounded-[5px] border border-[#767676] text-[14px] leading-5">
          <button type="button" className="flex w-[99px] flex-col items-center pt-2.5"><BankIcon />Données b...</button>
          <button type="button" className="flex w-[98px] flex-col items-center pt-2.5"><MoneyIcon />Devises</button>
          <button type="button" aria-label="Autres types" className="-my-px -mr-px flex flex-1 items-center justify-center rounded-r-[5px] border border-[#a8a8a8]"><CustomIcon c="#fff" /></button>
        </div>
      </Group>

      <Group label="Trier et filtrer" className="w-[294px]">
        <div className="flex flex-col gap-[18px] pt-[15px] pl-3.5">
          <button type="button" aria-label="Trier de A à Z"><SortIcon /></button>
          <button type="button" aria-label="Trier de Z à A"><SortIcon desc /></button>
        </div>
        <BigButton className="w-16" icon={<SortBigIcon />} lines={["Trier"]} />
        <Divider className="mt-[9px] h-[79px]" />
        <BigButton className="ml-2 h-[97px] w-[52px] rounded-[4px] bg-[#383838] outline outline-1 -outline-offset-1 outline-[#9a9a9a]" icon={<FunnelBig />} lines={["Filtrer"]} />
        <div className="ml-[7px]">
          <RowButton icon={<FunnelSmall kind="clear" c="#8a8a8a" />} text="Effacer" disabled />
          <RowButton icon={<FunnelSmall kind="reapply" c="#8a8a8a" />} text="Réappliquer" disabled />
          <RowButton icon={<FunnelSmall kind="advanced" c={L} />} text="Avancé" />
        </div>
      </Group>

      <Group label="Outils de données" className="w-[198px]">
        <BigButton className="ml-1 w-[76px]" icon={<ConvertIcon />} lines={["Convertir"]} />
        <div className="ml-0.5 w-[62px]">
          <Row><IconButton label="Remplissage instantané" className="w-5"><FlashIcon /></IconButton></Row>
          <Row><IconButton label="Supprimer les doublons" className="w-5"><DedupIcon /></IconButton></Row>
          <Row><IconButton label="Validation des données" className="w-5"><ValidIcon /></IconButton><CaretButton label="Options de validation" className="ml-[11px]" /></Row>
        </div>
        <div>
          <Row><IconButton label="Consolider" className="w-5"><ConsolidateIcon /></IconButton></Row>
          <Row><IconButton label="Modèle de données" className="w-5"><ModelIcon /></IconButton><CaretButton label="Options du modèle" className="ml-[3px]" /></Row>
        </div>
      </Group>

      <Group label="Prévision" className="w-[170px]">
        <BigButton className="ml-1.5 w-[86px]" icon={<WhatIfIcon />} lines={["Analyse", "scénarios"]} caret />
        <BigButton className="w-[68px]" icon={<ForecastIcon />} lines={["Feuille de", "prévision"]} />
      </Group>
      <Group label="" className="w-[68px]">
        <BigButton className="w-full" iconClass="h-[39px]" icon={<OutlineIcon />} lines={["Plan", ""]} caret />
      </Group>
    </Ribbon>
  );
}

const COLUMNS = [
  ["A", "Colonne1", "w-[301px]"],
  ["B", "customer_id", "w-[301px]"],
  ["C", "order_status", "w-[122px]"],
  ["D", "order_purchase_timestamp", "w-[237px]"],
  ["E", "order_approved_at", "w-[170px]"],
  ["F", "order_delivered_carrier_date", "w-[247px]"],
  ["G", "order_delivered_customer_date", "w-[269px]"],
  ["H", "order_estimated_delivery_date", "pl-[50px]"],
];

const ROWS = [
  ["e481f51cbdc54678b7cc49136f2d6af7", "9ef432eb6251297304e76186b10a928d", "delivered", "02/10/2017 10:56", "02/10/2017 11:07", "04/10/2017 19:55", "10/10/2017 21:25", "18/10/2017"],
  ["53cdb2fc8bc7dce0b6741e2150273451", "b0830fb4747a6c6d20dea0b8c802d7ef", "delivered", "24/07/2018 20:41", "26/07/2018 03:24", "26/07/2018 14:31", "07/08/2018 15:27", "13/08/2018"],
  ["47770eb9100c2d0c44946d9cf07ec65d", "41ce2a54c0b03bf3443c3d931a367089", "delivered", "08/08/2018 08:38", "08/08/2018 08:55", "08/08/2018 13:50", "17/08/2018 18:06", "04/09/2018"],
  ["949d5b44dbf5de918fe9c16f97b45f8a", "f88197465ea7920adcdbec7375364d82", "delivered", "18/11/2017 19:28", "18/11/2017 19:45", "22/11/2017 13:39", "02/12/2017 00:28", "15/12/2017"],
  ["ad21c59c0840e6cb83a9ceb5573f8159", "8ab97904e6daea8866dbdbc4fb7aad2c", "delivered", "13/02/2018 21:18", "13/02/2018 22:20", "14/02/2018 19:46", "16/02/2018 18:17", "26/02/2018"],
  ["a4591c265e18cb1dcee52889e2d8acc3", "503740e9ca751ccdda7ba28e9ab8f608", "delivered", "09/07/2017 21:57", "09/07/2017 22:10", "11/07/2017 14:58", "26/07/2017 10:57", "01/08/2017"],
  ["136cce7faa42fdb2cefd53fdc79a6098", "ed0271e0b7da060a393796590e7b737a", "invoiced", "11/04/2017 12:22", "13/04/2017 13:25", "", "", "09/05/2017"],
  ["6514b8ad8028c9f2cc2374ded245783f", "9bdf08b4b3b52b5526ff42d37d47f222", "delivered", "16/05/2017 13:10", "16/05/2017 13:22", "22/05/2017 10:07", "26/05/2017 12:55", "07/06/2017"],
  ["76c6e866289321a7c93b82b54852dc33", "f54a9f0e6b351c431402b8461ea51999", "delivered", "23/01/2017 18:29", "25/01/2017 02:50", "26/01/2017 14:16", "02/02/2017 14:08", "06/03/2017"],
  ["e69bfb5eb88e0ed6a785585b27e16dbf", "31ad1d1b63eb9962463f764d4e6e0c9d", "delivered", "29/07/2017 11:55", "29/07/2017 12:05", "10/08/2017 19:45", "16/08/2017 17:14", "23/08/2017"],
  ["e6ce16cb79ec1d90b1da9085a6118aeb", "494dded5b201313c64ed7f100595b95c", "delivered", "16/05/2017 19:41", "16/05/2017 19:50", "18/05/2017 11:40", "29/05/2017 11:18", "07/06/2017"],
  ["34513ce0c4fab462a55830c0989c7edb", "7711cf624183d843aafe81855097bc37", "delivered", "13/07/2017 19:58", "13/07/2017 20:10", "14/07/2017 18:43", "19/07/2017 14:04", "08/08/2017"],
  ["82566a660a982b15fb86e904c8d32918", "d3e3b74c766bc6214e0c830b17ee2341", "delivered", "07/06/2018 10:06", "09/06/2018 03:13", "11/06/2018 13:29", "19/06/2018 12:05", "18/07/2018"],
  ["5ff96c15d0b717ac6ad1f3d77225a350", "19402a48fe860416adf93348aba37740", "delivered", "25/07/2018 17:44", "25/07/2018 17:55", "26/07/2018 13:16", "30/07/2018 15:52", "08/08/2018"],
  ["432aaf21d85167c2c86ec9448c4e42cc", "3df704f53d3f1d4818840b34ec672a9f", "delivered", "01/03/2018 14:14", "01/03/2018 15:10", "02/03/2018 21:09", "12/03/2018 23:36", "21/03/2018"],
  ["dcb36b511fcac050b97cd5c05de84dc3", "3b6828a50ffe546942b7a473d70ac0fc", "delivered", "07/06/2018 19:03", "12/06/2018 23:31", "11/06/2018 14:54", "21/06/2018 15:34", "04/07/2018"],
  ["403b97836b0c04a622354cf531062e5f", "738b086814c6fcc74b8cc583f8516ee3", "delivered", "02/01/2018 19:00", "02/01/2018 19:09", "03/01/2018 18:19", "20/01/2018 01:38", "06/02/2018"],
  ["116f0b09343b49556bbad5f35bee0cdf", "3187789bec990987628d7a9beb4dd6ac", "delivered", "26/12/2017 23:41", "26/12/2017 23:50", "28/12/2017 18:33", "08/01/2018 22:36", "29/01/2018"],
];

function RowHead({ n }) {
  return <th scope="row" className="h-6 border-r border-b border-[#4a4a4a] bg-[#0a0a0a] p-0 text-center font-normal text-[#d0d0d0]">{n}</th>;
}

function Sheet() {
  const last = COLUMNS.length - 1;
  return (
    <div className="mt-2 flex min-h-0 flex-1">
      <div className="min-w-0 flex-1 overflow-hidden font-[Roboto,sans-serif] text-[16px] leading-[22px]">
        <table className="w-full table-fixed border-separate border-spacing-0 bg-white text-[#111]">
          <thead>
            <tr>
              <th className="h-6 w-[34px] border-r border-b border-[#4a4a4a] bg-[#0a0a0a] p-0">
                <button type="button" aria-label="Tout sélectionner" className="ml-3.5 block"><Svg w={16} h={16} s="none"><path d="M16 0v16H0z" fill="#6a6a6a" /></Svg></button>
              </th>
              {COLUMNS.map(([k, , cls], j) => (
                <th key={k} scope="col" className={`h-6 border-b border-r-[#3d3d3d] border-b-[#6a6a6a] bg-[#0a0a0a] py-0 text-center font-normal text-[#d0d0d0] ${j < last ? "border-r" : ""} ${cls}`}>{k}</th>
              ))}
            </tr>
          </thead>
          <tbody>
            <tr>
              <RowHead n={1} />
              {COLUMNS.map(([k, name], j) => (
                <td key={k} className={`h-6 overflow-hidden border-b border-[#dcdcdc] p-0 pl-[3px] ${j < last ? "border-r" : ""}`}>
                  <div className="flex h-[23px] items-center justify-between">
                    <span className="whitespace-nowrap">{name}</span>
                    {j < last && (
                      <button type="button" aria-label={`Filtrer ${name}`} className="flex size-[21px] shrink-0 items-center justify-center border border-[#a6adba] bg-linear-to-b from-white to-[#eceff4]">
                        <Svg w={8} h={5} s="none"><path d="M0 0h8L4 4.500z" fill="#5f5f5f" /></Svg>
                      </button>
                    )}
                  </div>
                </td>
              ))}
            </tr>
            {ROWS.map((row, i) => (
              <tr key={row[0]}>
                <RowHead n={i + 2} />
                {row.map((v, j) => (
                  <td key={j} className={`h-6 border-b border-[#dcdcdc] py-0 pl-[3px] whitespace-nowrap ${j < last ? "border-r pr-[3px]" : ""} ${j > 2 ? "text-right" : ""}`}>{v}</td>
                ))}
              </tr>
            ))}
          </tbody>
        </table>
      </div>
      <div className="flex w-[25px] shrink-0 justify-center bg-[#0a0a0a]">
        <div className="flex w-[21px] flex-col items-center rounded-t-[10px] bg-[#141414] pt-1.5">
          <Svg w={12} h={10} s="none"><path d="M6 .500L11.500 9.500H.500z" fill="#9f9f9f" /></Svg>
          <span className="mt-[5px] h-[21px] w-[11px] rounded-full bg-[#9f9f9f]" />
        </div>
      </div>
    </div>
  );
}

export default function App() {
  return (
    <div className="flex h-screen flex-col overflow-hidden bg-[#0a0a0a] font-['Noto_Sans','Open_Sans',sans-serif] text-white">
      <section aria-label="Classeur 1" className="shrink-0">
        <TitleBar active id="autosave-1" title="olist_orders_datase..." status="Enregistré dans ce PC" leftClass="w-[837px]" />
        <TabRow selected="Accueil" />
        <HomeRibbon />
        <FormulaBar
          value={'order_id,"customer_id","order_status","order_purchase_timestamp","order_approved_at","order_delivered_carrier_date","order_delivered_customer_date","order_estimated_delivery_date"'}
          barClass="h-[53px]"
          boxClass="h-[53px] rounded-t-[5px] border-x border-t"
        />
      </section>
      <section aria-label="Classeur 2" className="flex min-h-0 flex-1 flex-col">
        <TitleBar id="autosave-2" title="olist_orders_dataset.csv" leftClass="w-[740px]" />
        <TabRow selected="Données" extra={["Création de tableau", "Requête"]} />
        <DataRibbon />
        <FormulaBar value="Colonne1" barClass="h-[78px]" boxClass="h-[78px] rounded-[5px] border" />
        <Sheet />
      </section>
    </div>
  );
}
